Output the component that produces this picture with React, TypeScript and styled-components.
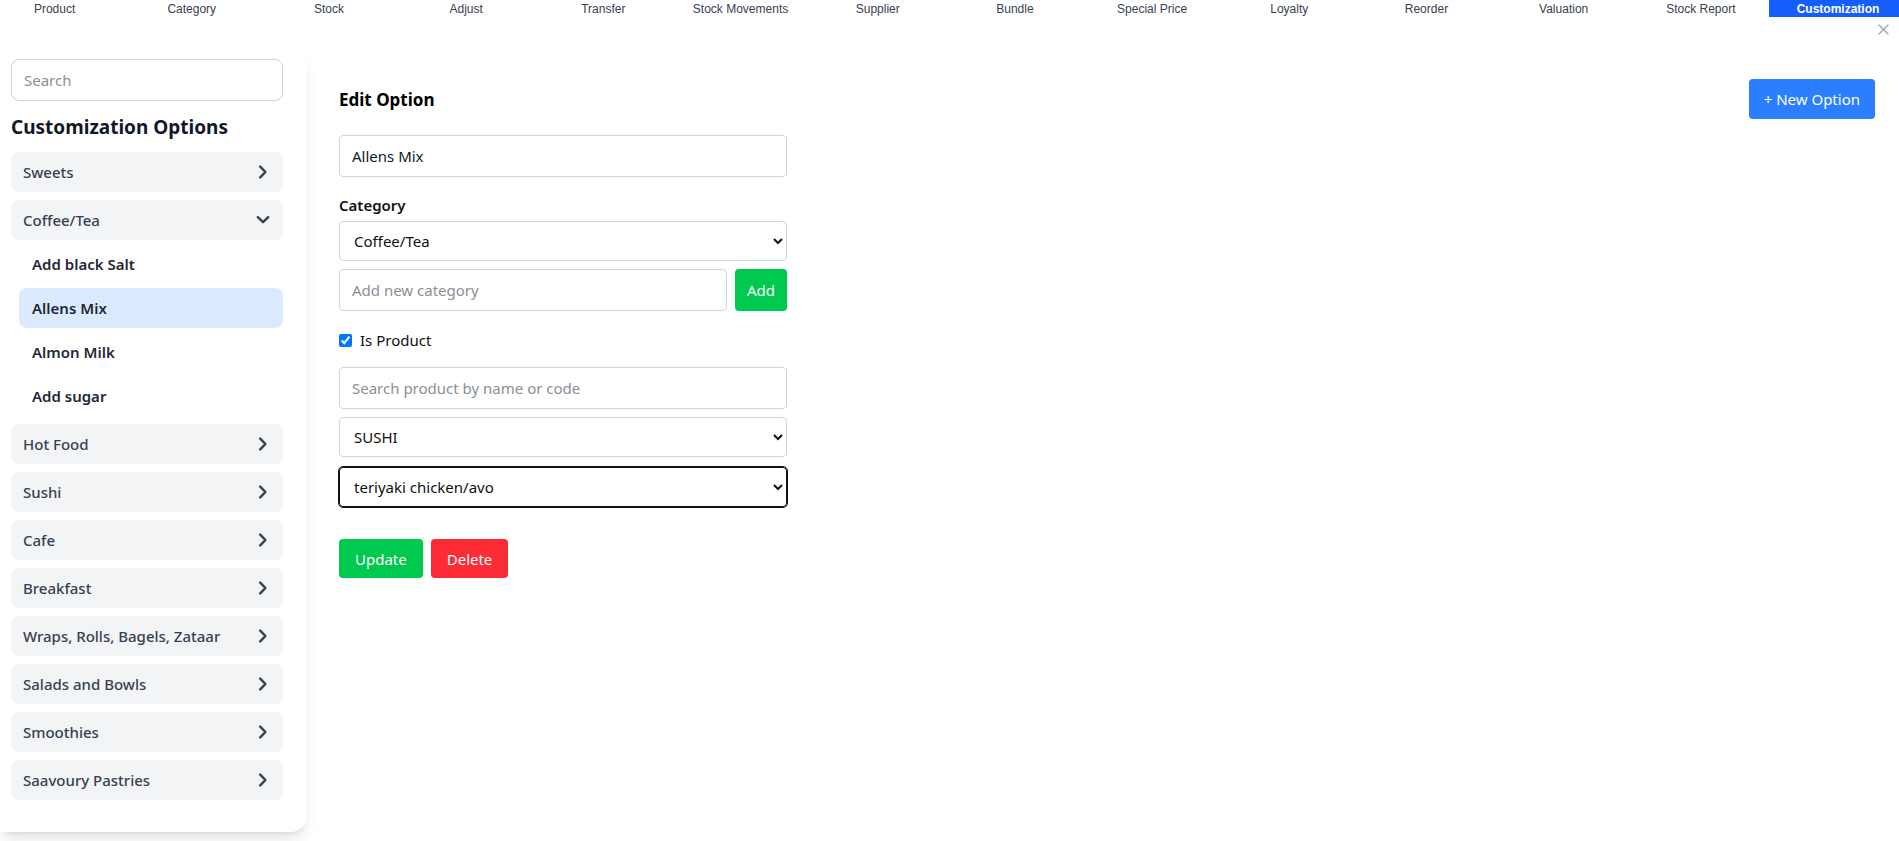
import React, { useState } from "react";
import styled, { createGlobalStyle } from "styled-components";

const GlobalStyle = createGlobalStyle`
    *, *::before, *::after { box-sizing: border-box; }
    html, body {
        margin: 0;
        padding: 0;
        background: #ffffff;
        overflow: hidden;
        font-family: "Noto Sans", "Open Sans", sans-serif;
        color: #111827;
    }
`;

const navItems = [
    "Product", "Category", "Stock", "Adjust", "Transfer", "Stock Movements", "Supplier",
    "Bundle", "Special Price", "Loyalty", "Reorder", "Valuation", "Stock Report", "Customization",
];

const categories = [
    "Sweets", "Coffee/Tea", "Hot Food", "Sushi", "Cafe", "Breakfast",
    "Wraps, Rolls, Bagels, Zataar", "Salads and Bowls", "Smoothies", "Saavoury Pastries",
];

const coffeeOptions = ["Add black Salt", "Allens Mix", "Almon Milk", "Add sugar"];

const Chevron = ({ open }: { open?: boolean }) => (
    <svg width="14" height="14" viewBox="0 0 14 14" fill="none">
        {open ? (
            <polyline points="1.8,4.2 7,9.2 12.2,4.2" stroke="#374151" strokeWidth="2.4" strokeLinecap="round" strokeLinejoin="round" />
        ) : (
            <polyline points="4.2,1.6 9.4,7 4.2,12.4" stroke="#374151" strokeWidth="2.4" strokeLinecap="round" strokeLinejoin="round" />
        )}
    </svg>
);

export default function App() {
    const [selected, setSelected] = useState("Allens Mix");
    const [isProduct, setIsProduct] = useState(true);

    return (
        <Page>
            <GlobalStyle />
            <NavBar>
                <NavList>
                    {navItems.map((item) => (
                        <NavItem key={item} active={item === "Customization"}>{item}</NavItem>
                    ))}
                </NavList>
            </NavBar>
            <CloseRow>
                <CloseButton aria-label="close">
                    <svg width="11" height="11" viewBox="0 0 11 11">
                        <path d="M1 1 L10 10 M10 1 L1 10" stroke="#9ca3af" strokeWidth="1.3" strokeLinecap="round" />
                    </svg>
                </CloseButton>
            </CloseRow>
            <Layout>
                <Sidebar>
                    <SearchInput placeholder="Search" />
                    <SidebarTitle>Customization Options</SidebarTitle>
                    <CategoryList>
                        {categories.map((cat) => (
                            <CategoryGroup key={cat}>
                                <CategoryRow>
                                    <span>{cat}</span>
                                    <Chevron open={cat === "Coffee/Tea"} />
                                </CategoryRow>
                                {cat === "Coffee/Tea" && (
                                    <OptionList>
                                        {coffeeOptions.map((opt) => (
                                            <OptionItem key={opt} active={opt === selected} onClick={() => setSelected(opt)}>
                                                {opt}
                                            </OptionItem>
                                        ))}
                                    </OptionList>
                                )}
                            </CategoryGroup>
                        ))}
                    </CategoryList>
                </Sidebar>
                <Main>
                    <Header>
                        <Title>Edit Option</Title>
                        <PrimaryButton>+ New Option</PrimaryButton>
                    </Header>
                    <Form>
                        <TextInput defaultValue={selected} />
                        <Label spacing="16px">Category</Label>
                        <Select spacing="4px" defaultValue="Coffee/Tea">
                            <option>Sweets</option>
                            <option>Coffee/Tea</option>
                            <option>Hot Food</option>
                        </Select>
                        <InlineRow>
                            <TextInput placeholder="Add new category" />
                            <ActionButton tone="green" compact>Add</ActionButton>
                        </InlineRow>
                        <CheckRow>
                            <Checkbox type="checkbox" checked={isProduct} onChange={() => setIsProduct(!isProduct)} />
                            <span>Is Product</span>
                        </CheckRow>
                        <TextInput spacing="17px" placeholder="Search product by name or code" />
                        <Select spacing="8px" defaultValue="SUSHI">
                            <option>SUSHI</option>
                            <option>CAFE</option>
                        </Select>
                        <Select spacing="10px" focused defaultValue="teriyaki chicken/avo">
                            <option>teriyaki chicken/avo</option>
                            <option>salmon/avo</option>
                        </Select>
                        <ButtonRow>
                            <ActionButton tone="green">Update</ActionButton>
                            <ActionButton tone="red">Delete</ActionButton>
                        </ButtonRow>
                    </Form>
                </Main>
            </Layout>
        </Page>
    );
}

const Page = styled.div`
    width: 100%;
    height: 841px;
    display: flex;
    flex-direction: column;
`;

const NavBar = styled.nav`
    height: 17px;
    overflow: hidden;
    flex-shrink: 0;
`;

const NavList = styled.div`
    display: flex;
    margin-left: -14px;
`;

const NavItem = styled.div<{ active?: boolean }>`
    flex: 0 0 137.2px;
    height: 17px;
    display: flex;
    align-items: center;
    justify-content: center;
    font-family: "Liberation Sans", Arial, sans-serif;
    font-size: 12px;
    font-weight: ${(p) => (p.active ? 700 : 400)};
    color: ${(p) => (p.active ? "#ffffff" : "#374151")};
    background: ${(p) => (p.active ? "#155dfc" : "transparent")};
    white-space: nowrap;
`;

const CloseRow = styled.div`
    height: 30px;
    display: flex;
    justify-content: flex-end;
    align-items: flex-start;
    padding: 6px 10px 0 0;
`;

const CloseButton = styled.button`
    border: none;
    background: none;
    padding: 0;
    width: 12px;
    height: 12px;
    display: flex;
    align-items: center;
    justify-content: center;
`;

const Layout = styled.div`
    display: flex;
    align-items: flex-start;
    flex: 1;
`;

const Sidebar = styled.aside`
    width: 307px;
    flex-shrink: 0;
    background: #ffffff;
    padding: 12px 24px 32px 11px;
    border-radius: 0 16px 16px 0;
    box-shadow: 0 10px 15px -3px rgba(0, 0, 0, 0.1), 0 4px 6px -4px rgba(0, 0, 0, 0.1);
`;

const SearchInput = styled.input`
    width: 100%;
    height: 42px;
    border: 1px solid #d1d5db;
    border-radius: 8px;
    padding: 0 12px;
    font-family: inherit;
    font-size: 15px;
    color: #111827;
    outline: none;
    &::placeholder { color: #8b8f96; }
`;

const SidebarTitle = styled.h2`
    margin: 14px 0 13px;
    font-size: 19px;
    line-height: 24px;
    font-weight: 700;
    color: #111827;
`;

const CategoryList = styled.div`
    display: flex;
    flex-direction: column;
    gap: 8px;
`;

const CategoryGroup = styled.div`
    display: flex;
    flex-direction: column;
`;

const CategoryRow = styled.div`
    height: 40px;
    display: flex;
    align-items: center;
    justify-content: space-between;
    padding: 0 13px 0 12px;
    background: #f3f4f6;
    border-radius: 8px;
    font-size: 15px;
    font-weight: 500;
    color: #364152;
    cursor: pointer;
`;

const OptionList = styled.div`
    display: flex;
    flex-direction: column;
    gap: 4px;
    padding: 4px 0 0 8px;
`;

const OptionItem = styled.div<{ active?: boolean }>`
    height: 40px;
    display: flex;
    align-items: center;
    padding: 0 13px;
    border-radius: 8px;
    font-size: 15px;
    font-weight: 600;
    color: #1f2937;
    background: ${(p) => (p.active ? "#dbeafe" : "transparent")};
    cursor: pointer;
`;

const Main = styled.main`
    flex: 1;
    padding: 32px 24px 0 32px;
`;

const Header = styled.div`
    display: flex;
    align-items: center;
    justify-content: space-between;
    height: 40px;
    margin-bottom: 16px;
`;

const Title = styled.h1`
    margin: 0;
    font-size: 17px;
    font-weight: 700;
    color: #000000;
`;

const PrimaryButton = styled.button`
    height: 40px;
    padding: 0 15px;
    border: none;
    border-radius: 4px;
    background: #2b7fff;
    color: #ffffff;
    font-family: inherit;
    font-size: 15px;
`;

const Form = styled.div`
    width: 448px;
    display: flex;
    flex-direction: column;
`;

const TextInput = styled.input<{ spacing?: string }>`
    width: 100%;
    height: 42px;
    margin-top: ${(p) => p.spacing || "0"};
    border: 1px solid #d1d5db;
    border-radius: 4px;
    padding: 0 12px;
    font-family: inherit;
    font-size: 15px;
    color: #111827;
    outline: none;
    &::placeholder { color: #8b8f96; }
`;

const Label = styled.label<{ spacing?: string }>`
    margin-top: ${(p) => p.spacing || "0"};
    font-size: 15px;
    line-height: 24px;
    font-weight: 600;
    color: #111111;
`;

const Select = styled.select<{ spacing?: string; focused?: boolean }>`
    width: 100%;
    height: 40px;
    margin-top: ${(p) => p.spacing || "0"};
    padding: 0 10px;
    border: 1px solid ${(p) => (p.focused ? "#101010" : "#d1d5db")};
    outline: ${(p) => (p.focused ? "1px solid #101010" : "none")};
    border-radius: 4px;
    background: #ffffff;
    font-family: inherit;
    font-size: 15px;
    color: #111111;
`;

const InlineRow = styled.div`
    display: flex;
    gap: 8px;
    margin-top: 8px;
`;

const CheckRow = styled.label`
    display: flex;
    align-items: center;
    gap: 8px;
    height: 20px;
    margin-top: 19px;
    font-size: 15px;
    color: #111111;
`;

const Checkbox = styled.input`
    width: 13px;
    height: 13px;
    margin: 0;
    accent-color: #0075ff;
`;

const ButtonRow = styled.div`
    display: flex;
    gap: 8px;
    margin-top: 32px;
`;

const ActionButton = styled.button<{ tone: "green" | "red"; compact?: boolean }>`
    flex-shrink: 0;
    height: ${(p) => (p.compact ? "42px" : "39px")};
    padding: 0 ${(p) => (p.compact ? "12px" : "16px")};
    border: none;
    border-radius: 4px;
    background: ${(p) => (p.tone === "green" ? "#00c950" : "#fb2c36")};
    color: #ffffff;
    font-family: inherit;
    font-size: 15px;
`;
